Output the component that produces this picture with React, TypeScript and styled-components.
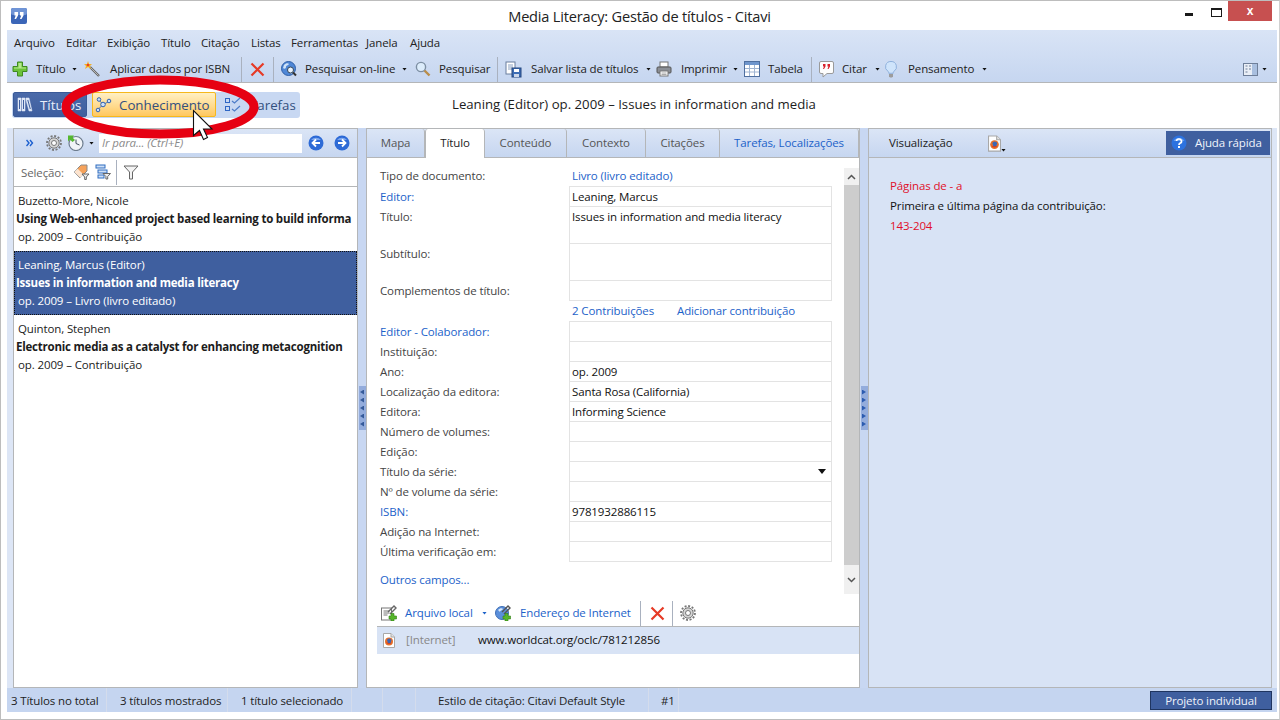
import React from "react";
import styled, { createGlobalStyle } from "styled-components";

const Global = createGlobalStyle`
  html, body { margin: 0; padding: 0; background: #fff; }
  *, *::before, *::after { box-sizing: border-box; }
  body { font-family: "Open Sans", "Liberation Sans", sans-serif; font-size: 11.5px; color: #1c1c1c; }
  #root { width: 1280px; height: 720px; overflow: hidden; }
`;

const BLUE = "#1c62c9";
const LINE = "#b4b6b8";
const SEL = "#3f5f9f";

const Win = styled.div`
  position: relative; width: 1280px; height: 720px;
  border: 1px solid #bdbdbd; border-right-color: #d0d0d0; background: #fff;
  display: flex; flex-direction: column; letter-spacing: -0.12px;
`;
const TitleBar = styled.div`
  height: 29px; flex: none; display: flex; align-items: flex-start; position: relative; background: #fff;
`;
const AppIcon = styled.svg`margin: 7px 0 0 10px; flex: none;`;
const WinTitle = styled.div`
  position: absolute; left: 0; right: 0; top: 5px; text-align: center; font-size: 14.6px; line-height: 20px;
  color: #222; letter-spacing: -0.2px; padding-right: 1px;
`;
const WinControls = styled.div`margin-left: auto; margin-right: 7px; display: flex; height: 20px; align-items: flex-start; position: relative;`;
const MinBtn = styled.span`width: 8px; height: 3px; background: #1a1a1a; margin: 12px 18px 0 0;`;
const MaxBtn = styled.span`width: 11px; height: 9px; border: 1px solid #1a1a1a; border-top-width: 2px; margin: 7px 6px 0 0;`;
const CloseBtn = styled.span`
  width: 44px; height: 20px; background: #c75050; color: #fff; font-size: 12px; font-weight: 700;
  display: flex; align-items: center; justify-content: center; font-family: "Liberation Sans", sans-serif;
`;

const Client = styled.div`
  margin: 0 2px 7px 6px; flex: 1; min-height: 0; display: flex; flex-direction: column; background: #dde6f6;
`;
const Band = styled.div`
  height: 53px; flex: none; border-bottom: 1px solid ${LINE};
  background: linear-gradient(#d9e4f6, #c6d6f0);
`;
const MenuRow = styled.div`height: 26px; display: flex; align-items: center; padding: 0 0 2px 7px; color: #222;`;
const MenuItem = styled.span<{ $w: number }>`width: ${(p) => p.$w}px; white-space: nowrap; flex: none;`;
const ToolRow = styled.div`height: 26px; display: flex; align-items: center; color: #222;`;
const ToolIcon = styled.svg<{ $ml: number }>`margin-left: ${(p) => p.$ml}px; flex: none; display: block;`;
const ToolLabel = styled.span<{ $ml: number; $w: number }>`
  margin-left: ${(p) => p.$ml}px; width: ${(p) => p.$w}px; flex: none; white-space: nowrap; margin-bottom: 2px;
`;
const Caret = styled.span<{ $ml: number; $c?: string; $mt?: number }>`
  margin-left: ${(p) => p.$ml}px; margin-top: ${(p) => p.$mt || 0}px; flex: none; width: 5px; height: 3px;
  background: ${(p) => p.$c || "#111"}; clip-path: polygon(0 0, 100% 0, 50% 100%);
`;
const ToolSep = styled.span<{ $ml: number }>`
  margin-left: ${(p) => p.$ml}px; width: 1px; height: 25px; background: #a9b1bf; flex: none;
`;

const ViewBar = styled.div`height: 45px; flex: none; background: #fff; display: flex; align-items: flex-start; padding: 9px 0 0 5px;`;
const ViewPill = styled.div`
  width: 288px; height: 26px; background: #c8d8f2; border-radius: 3px; display: flex; font-size: 13.3px;
  letter-spacing: 0;
`;
const ViewTab = styled.div<{ $w: number; $ml: number; $state?: "active" | "hover" }>`
  width: ${(p) => p.$w}px; margin-left: ${(p) => p.$ml}px; height: 25px; flex: none;
  display: flex; align-items: center; border-radius: 2px; padding-left: 3px; white-space: nowrap;
  color: ${(p) => (p.$state === "active" ? "#e8eefa" : "#33507f")};
  background: ${(p) =>
    p.$state === "active"
      ? `linear-gradient(#4a6aa9, ${SEL})`
      : p.$state === "hover"
      ? "linear-gradient(#fff0c4, #ffd98a 60%, #ffc75e)"
      : "transparent"};
  border: 1px solid ${(p) => (p.$state === "active" ? "#3a5a98" : p.$state === "hover" ? "#f6b81c" : "transparent")};
`;
const ViewLabel = styled.span<{ $ml: number }>`margin-left: ${(p) => p.$ml}px;`;
const DocTitle = styled.div`margin: 2px 0 0 152px; font-size: 13.2px; line-height: 20px; color: #1c1c1c; white-space: nowrap; letter-spacing: 0;`;

const Panels = styled.div`height: 560px; flex: none; display: flex; padding-left: 6px;`;
const Panel = styled.div<{ $w: number; $bg?: string }>`
  width: ${(p) => p.$w}px; flex: none; border: 1px solid ${LINE};
  background: ${(p) => p.$bg || "#fff"}; display: flex; flex-direction: column; min-width: 0;
`;
const Splitter = styled.div`
  width: 8px; flex: none; background: #c8d7f2; display: flex; align-items: center; justify-content: center;
`;
const SplitHandle = styled.div`
  width: 7px; height: 44px; background: #93acdc; display: flex; flex-direction: column; align-items: center;
  justify-content: center; gap: 3px;
`;
const Tri = styled.span<{ $dir: "l" | "r" }>`
  width: 4px; height: 5px; background: ${(p) => (p.$dir === "l" ? "#355a9a" : "#2b5bb0")};
  clip-path: ${(p) => (p.$dir === "l" ? "polygon(100% 0, 100% 100%, 0 50%)" : "polygon(0 0, 0 100%, 100% 50%)")};
`;
const PanelHead = styled.div`
  height: 29px; flex: none; border-bottom: 1px solid ${LINE};
  background: linear-gradient(#dbe5f6, #c6d6f0); display: flex; align-items: center;
`;
const SearchBox = styled.div`
  margin-left: 5px; width: 203px; height: 19px; background: #fff; flex: none; color: #8a8a8a; font-style: italic;
  padding-left: 3px; line-height: 18px; white-space: nowrap; overflow: hidden;
`;
const SelectBar = styled.div`
  height: 29px; flex: none; border-bottom: 1px solid ${LINE}; display: flex; align-items: center; color: #666;
  ${ToolLabel} { margin-bottom: 0; }
`;
const ListItem = styled.div<{ $sel?: boolean }>`
  height: 64px; flex: none; padding: 5px 0 0 2px;
  overflow: hidden; white-space: nowrap;
  color: ${(p) => (p.$sel ? "#fff" : "#1c1c1c")};
  background: ${(p) => (p.$sel ? SEL : "#fff")};
  ${(p) => (p.$sel ? "outline: 1px dotted #111; outline-offset: -1px;" : "")}
`;
const ListLine = styled.div<{ $bold?: boolean }>`
  height: 18px; line-height: 18px; padding-left: ${(p) => (p.$bold ? "0" : "2px")};
  font-weight: ${(p) => (p.$bold ? 700 : 400)};
  letter-spacing: ${(p) => (p.$bold ? "-0.22px" : "-0.12px")};
`;

const TabBar = styled.div`height: 29px; flex: none; border-bottom: 1px solid ${LINE}; display: flex; background: linear-gradient(#dbe5f6, #c6d6f0);`;
const Tab = styled.div<{ $w: number; $active?: boolean; $link?: boolean }>`
  width: ${(p) => p.$w}px; flex: none; height: ${(p) => (p.$active ? "29px" : "28px")};
  display: flex; align-items: center; justify-content: center; white-space: nowrap; padding-bottom: ${(p) => (p.$active ? "3px" : "2px")};
  border-right: 1px solid ${LINE}; border-radius: 3px 3px 0 0;
  ${(p) => (p.$active ? `background:#fff; border-left:1px solid ${LINE};` : "")}
  color: ${(p) => (p.$active ? "#1c1c1c" : p.$link ? BLUE : "#555")};
`;
const FormArea = styled.div`height: 442px; flex: none; display: flex;`;
const Form = styled.div`width: 477px; flex: none; padding: 7px 0 0 13px;`;
const FieldRow = styled.div<{ $h?: number }>`
  height: ${(p) => p.$h || 20}px; display: grid; grid-template-columns: 189px 263px; color: #444; line-height: 21px;
`;
const FieldLabel = styled.span<{ $link?: boolean }>`color: ${(p) => (p.$link ? BLUE : "#444")}; white-space: nowrap;`;
const FieldBox = styled.div<{ $h?: number }>`
  height: ${(p) => (p.$h || 20) + 1}px; border: 1px solid #e3e3e3; color: #111; padding-left: 2px;
  line-height: 19px; white-space: nowrap; position: relative; display: block;
`;
const FieldLink = styled.span<{ $w?: number }>`
  color: ${BLUE}; display: inline-block; white-space: nowrap; padding-left: 3px; ${(p) => (p.$w ? `width:${p.$w}px;` : "")}
`;
const FieldLinks = styled.div`display: flex;`;
const SelectArrow = styled.span`
  position: absolute; right: 5px; top: 7px; width: 8px; height: 5px; background: #111;
  clip-path: polygon(0 0, 100% 0, 50% 100%);
`;
const OtherFields = styled.div`margin-top: 9px; color: ${BLUE}; line-height: 20px;`;
const ScrollBar = styled.div`
  width: 15px; margin: 10px 0 6px 0; flex: none; background: #f0f0f0; display: flex; flex-direction: column;
`;
const ScrollBtn = styled.div<{ $h: number }>`height: ${(p) => p.$h}px; flex: none; display: flex; align-items: center; justify-content: center;`;
const ScrollThumb = styled.div`height: 380px; background: #cdcdcd; flex: none;`;
const AttachBar = styled.div`
  height: 27px; flex: none; margin-left: 10px; border-bottom: 1px solid ${LINE}; display: flex; align-items: center; color: ${BLUE};
`;
const AttachRow = styled.div`
  height: 27px; flex: none; margin-left: 10px; background: #d8e3f5; display: flex; align-items: center;
`;
const Muted = styled.span`margin: 0 0 2px 11px; width: 72px; color: #888; flex: none;`;
const Url = styled.span`color: #111; margin-bottom: 2px;`;

const PreviewHead = styled.div`
  height: 29px; flex: none; border-bottom: 1px solid ${LINE}; display: flex; align-items: center; padding-left: 20px;
  background: linear-gradient(#dbe5f6, #c6d6f0); position: relative; color: #222;
`;
const HelpBtn = styled.div`
  margin-left: auto; margin-right: 1px; width: 104px; height: 24px; background: ${SEL}; color: #f0f4fc; display: flex;
  align-items: center; padding-left: 5px; white-space: nowrap;
`;
const PreviewBody = styled.div`padding: 18px 0 0 21px; line-height: 20px; color: #111;`;
const RedText = styled.div`color: #e0102a;`;

const Status = styled.div`height: 24px; flex: none; background: #c5d5f0; display: flex; align-items: center; color: #222;`;
const StatusCell = styled.span<{ $w: number; $pl: number }>`
  width: ${(p) => p.$w}px; padding-left: ${(p) => p.$pl}px; flex: none; height: 100%;
  display: flex; align-items: center; border-right: 1px solid #d4dcec; white-space: nowrap;
`;
const ProjectBtn = styled.div`
  margin-left: auto; margin-right: 5px; width: 122px; height: 19px; background: ${SEL}; color: #eef2fb;
  border: 1px solid #1f3560; display: flex; align-items: center; justify-content: center; white-space: nowrap;
`;
const Overlay = styled.svg`position: absolute; pointer-events: none;`;
const Ring = styled(Overlay)`left: 56px; top: 70px;`;
const Pointer = styled(Overlay)`left: 191px; top: 108px;`;

type IP = { ml?: number };
const Plus = ({ ml = 0 }: IP) => (
  <ToolIcon $ml={ml} width="16" height="16" viewBox="0 0 16 16">
    <path d="M5.5 1h5v4.5H15v5h-4.5V15h-5v-4.5H1v-5h4.5z" fill="#6cc23a" stroke="#3f8a20" />
    <path d="M6.5 2h3v4.5H14v1H2v-1h4.500z" fill="#b5e88f" />
  </ToolIcon>
);
const Wand = ({ ml = 0 }: IP) => (
  <ToolIcon $ml={ml} width="16" height="16" viewBox="0 0 16 16">
    <path d="M6 6l9 9" stroke="#666" strokeWidth="2.4" />
    <path d="M6.500 6.500l8 8" stroke="#ccc" strokeWidth=".8" />
    <path d="M4 0l1 3 3 0-2 2 1 3-3-2-3 2 1-3-2-2 3 0z" fill="#f5b021" />
    <circle cx="4" cy="4" r="1.300" fill="#e8402a" />
  </ToolIcon>
);
const RedX = ({ ml = 0 }: IP) => (
  <ToolIcon $ml={ml} width="15" height="15" viewBox="0 0 15 15">
    <path d="M1.500 1.500l12 12M13.500 1.500l-12 12" stroke="#e63a26" strokeWidth="2.200" />
  </ToolIcon>
);
const Globe = ({ ml = 0 }: IP) => (
  <ToolIcon $ml={ml} width="16" height="16" viewBox="0 0 16 16">
    <circle cx="7.500" cy="7.500" r="7" fill="#4f87d6" stroke="#2f5fa8" />
    <path d="M3 4c2-2 4-2 5-1-1 2-3 1-3 3S3 8 2 7zM9 8c2-1 4 0 4 2l-3 3c-1-1-2-3-1-5z" fill="#cfe3f8" />
    <circle cx="9.500" cy="9" r="3" fill="#eaf3fd" stroke="#345" />
    <path d="M12 11.500l3 3" stroke="#333" strokeWidth="2" />
  </ToolIcon>
);
const Lens = ({ ml = 0 }: IP) => (
  <ToolIcon $ml={ml} width="16" height="16" viewBox="0 0 16 16">
    <circle cx="6" cy="6" r="4.600" fill="#dcecfb" stroke="#7d8fa3" strokeWidth="1.400" />
    <path d="M9.500 9.500l5 5" stroke="#b98d4a" strokeWidth="2.400" />
  </ToolIcon>
);
const SaveList = ({ ml = 0 }: IP) => (
  <ToolIcon $ml={ml} width="17" height="17" viewBox="0 0 17 17">
    <rect x="1" y="1" width="9" height="12" fill="#fff" stroke="#6b7f9e" />
    <path d="M3 4h5M3 6h5M3 8h5" stroke="#8aa0c0" />
    <rect x="7" y="7" width="9" height="9" fill="#3d6db5" stroke="#24477f" />
    <rect x="9" y="8" width="5" height="3" fill="#fff" />
    <rect x="9" y="13" width="5" height="3" fill="#cdd8ea" />
  </ToolIcon>
);
const Printer = ({ ml = 0 }: IP) => (
  <ToolIcon $ml={ml} width="16" height="16" viewBox="0 0 16 16">
    <rect x="4" y="1" width="8" height="5" fill="#fff" stroke="#777" />
    <rect x="1" y="6" width="14" height="6" rx="1" fill="#8b8f96" stroke="#555" />
    <rect x="4" y="10" width="8" height="5" fill="#fff" stroke="#777" />
    <path d="M5.500 12h5M5.500 13.500h5" stroke="#aaa" />
  </ToolIcon>
);
const TableIcon = ({ ml = 0 }: IP) => (
  <ToolIcon $ml={ml} width="16" height="16" viewBox="0 0 16 16">
    <rect x=".5" y=".5" width="15" height="15" fill="#fff" stroke="#4f6f9f" />
    <rect x="1" y="1" width="14" height="3" fill="#6e95cc" />
    <path d="M5.500 4v11M10.500 4v11M1 7.500h14M1 11h14" stroke="#9fb4d2" />
  </ToolIcon>
);
const QuoteBubble = ({ ml = 0 }: IP) => (
  <ToolIcon $ml={ml} width="15" height="17" viewBox="0 0 15 17">
    <path d="M2 .5h11a1.500 1.500 0 0 1 1.500 1.500v9a1.500 1.500 0 0 1-1.500 1.500H8L4 16v-3.500H2A1.500 1.500 0 0 1 .5 11V2A1.500 1.500 0 0 1 2 .5z" fill="#fdfdfd" stroke="#9a9a9a" />
    <path d="M4 3h2.500v2.500L5 8H4l1-2.500H4zM8.500 3H11v2.500L9.500 8h-1l1-2.500h-1z" fill="#d8202a" />
  </ToolIcon>
);
const Bulb = ({ ml = 0 }: IP) => (
  <ToolIcon $ml={ml} width="12" height="17" viewBox="0 0 12 17">
    <path d="M6 .5a5.300 5.300 0 0 1 3 9.800c-.7.5-.8 1.200-.8 2H3.800c0-.8-.1-1.500-.8-2A5.300 5.300 0 0 1 6 .5z" fill="#cfe4fb" stroke="#8eb0dc" />
    <path d="M4 13h4v2.500l-1 1H5l-1-1z" fill="#9c9c9c" />
  </ToolIcon>
);
const LayoutIcon = ({ ml = 0 }: IP) => (
  <ToolIcon $ml={ml} width="15" height="13" viewBox="0 0 15 13">
    <rect x=".5" y=".5" width="14" height="12" fill="#e9eef6" stroke="#6f7f99" />
    <rect x="9" y="1" width="5" height="11" fill="#a9bfdf" />
    <path d="M2.500 3h2M2.500 6h2M2.500 9h2M6 3h2M6 6h2" stroke="#6f7f99" />
  </ToolIcon>
);
const Gear = ({ ml = 0 }: IP) => (
  <ToolIcon $ml={ml} width="16" height="16" viewBox="0 0 16 16">
    <circle cx="8" cy="8" r="5.200" fill="#d4d4d4" stroke="#777" />
    <circle cx="8" cy="8" r="7" fill="none" stroke="#777" strokeWidth="1.800" strokeDasharray="2 1.660" />
    <circle cx="8" cy="8" r="2.500" fill="#fff" stroke="#777" />
  </ToolIcon>
);
const Clock = ({ ml = 0 }: IP) => (
  <ToolIcon $ml={ml} width="17" height="16" viewBox="0 0 17 16">
    <circle cx="9" cy="8.500" r="7" fill="#f1f4f8" stroke="#6d7c8e" strokeWidth="1.200" />
    <path d="M9 4.500v4l3.500 1.500" stroke="#44505e" fill="none" />
    <path d="M1 .5h6L5.500 2.500 8 5 5.500 7 3 4.500 1 6.500z" fill="#55b82f" />
  </ToolIcon>
);
const Chevrons = ({ ml = 0 }: IP) => (
  <ToolIcon $ml={ml} width="8" height="8" viewBox="0 0 8 8">
    <path d="M.5 1l2.500 3-2.500 3M4 1l2.500 3L4 7" fill="none" stroke="#1b5fcf" strokeWidth="1.400" />
  </ToolIcon>
);
const NavBtn = ({ ml = 0, left }: IP & { left?: boolean }) => (
  <ToolIcon $ml={ml} width="16" height="16" viewBox="0 0 16 16">
    <circle cx="8" cy="8" r="7.500" fill="#2d6ad6" />
    <path d="M3 5a6 5 0 0 1 10 0z" fill="#7ea8ee" />
    <path d={left ? "M12 8H5M8 4.500L4.500 8 8 11.500" : "M4 8h7M8 4.500L11.500 8 8 11.500"} fill="none" stroke="#fff" strokeWidth="1.800" />
  </ToolIcon>
);
const TagFilter = ({ ml = 0 }: IP) => (
  <ToolIcon $ml={ml} width="17" height="16" viewBox="0 0 17 16">
    <path d="M1 8l7-7h6v6l-7 7z" fill="#f6a25a" stroke="#8a8a8a" />
    <path d="M1 8l3.500-3.500L11 11l-3.500 3z" fill="#fff" opacity=".7" />
    <path d="M9 10h7l-2.700 3v2.500h-1.600V13z" fill="#eee" stroke="#666" />
  </ToolIcon>
);
const TreeFilter = ({ ml = 0 }: IP) => (
  <ToolIcon $ml={ml} width="16" height="16" viewBox="0 0 16 16">
    <rect x="1" y="1" width="9" height="3" fill="#cfe0f6" stroke="#2f6cc0" />
    <rect x="3" y="6" width="9" height="3" fill="#cfe0f6" stroke="#2f6cc0" />
    <rect x="3" y="11" width="6" height="3" fill="#cfe0f6" stroke="#2f6cc0" />
    <path d="M8 9.500h7.500l-2.800 3v2.500h-1.800v-2.500z" fill="#eee" stroke="#666" />
  </ToolIcon>
);
const Funnel = ({ ml = 0 }: IP) => (
  <ToolIcon $ml={ml} width="16" height="15" viewBox="0 0 16 15">
    <path d="M1 1h14L9.500 7v7h-3V7z" fill="#f3f3f3" stroke="#666" />
  </ToolIcon>
);
const FileFox = ({ ml = 0, w = 12, h = 15 }: IP & { w?: number; h?: number }) => (
  <ToolIcon $ml={ml} width={w} height={h} viewBox="0 0 12 15">
    <path d="M.5.5h7.500l3.500 3.500v10.500H.5z" fill="#fff" stroke="#a8a8a8" />
    <path d="M8 .5v3.500h3.500" fill="#e4e4e4" stroke="#a8a8a8" />
    <circle cx="6" cy="8.500" r="4" fill="#e8702a" />
    <path d="M4 7a2.500 2.500 0 0 1 4.500 0l-1 3.500H5z" fill="#3b66b5" />
    <path d="M3 9a3.200 3.200 0 0 0 6 0c-1 1.500-4 1.500-6 0z" fill="#d83b1f" />
  </ToolIcon>
);
const AttachFile = ({ ml = 0 }: IP) => (
  <ToolIcon $ml={ml} width="17" height="16" viewBox="0 0 17 16">
    <rect x=".5" y="3" width="10" height="12" fill="#fff" stroke="#777" />
    <path d="M2.500 6h6M2.500 8h6M2.500 10h4" stroke="#777" />
    <path d="M7 7l6-6 2 2-6 6" fill="none" stroke="#666" strokeWidth="1.400" />
    <path d="M10 8.500h3v2.500h2.500v3H13v2h-3v-2H8v-3h2z" fill="#56b52a" stroke="#2f7f14" strokeWidth=".6" />
  </ToolIcon>
);
const AttachWeb = ({ ml = 0 }: IP) => (
  <ToolIcon $ml={ml} width="17" height="16" viewBox="0 0 17 16">
    <circle cx="7" cy="8" r="6.500" fill="#5a8fdb" stroke="#3f6fb5" />
    <path d="M3 5c2-2 4-2 5-1-1 2-3 1-3 3z" fill="#d7e7f9" />
    <path d="M7 7l6-6 2 2-6 6" fill="none" stroke="#555" strokeWidth="1.400" />
    <path d="M10 8.500h3v2.500h2.500v3H13v2h-3v-2H8v-3h2z" fill="#56b52a" stroke="#2f7f14" strokeWidth=".6" />
  </ToolIcon>
);
const Books = ({ ml = 0 }: IP) => (
  <ToolIcon $ml={ml} width="16" height="15" viewBox="0 0 16 15">
    <path d="M1 1h3v13H1zM5 1h3v13H5zM9 1h3l3 13h-3l-3-11z" fill="#dbe5f5" stroke="#e8eefa" strokeWidth=".5" />
    <path d="M2.500 3v9M6.500 3v9M10.800 3l2.500 9" stroke="#3f5f9f" />
  </ToolIcon>
);
const Nodes = ({ ml = 0 }: IP) => (
  <ToolIcon $ml={ml} width="17" height="17" viewBox="0 0 17 17">
    <path d="M3 13.500L8 8.500 4 4M8 8.500l6-3" stroke="#4d74b4" fill="none" />
    <circle cx="8" cy="8.500" r="2.300" fill="#cfe0f6" stroke="#2f62b0" />
    <circle cx="4" cy="3.500" r="1.800" fill="#cfe0f6" stroke="#2f62b0" />
    <circle cx="14" cy="5" r="1.800" fill="#cfe0f6" stroke="#2f62b0" />
    <circle cx="3" cy="14" r="1.800" fill="#cfe0f6" stroke="#2f62b0" />
  </ToolIcon>
);
const Checks = ({ ml = 0 }: IP) => (
  <ToolIcon $ml={ml} width="17" height="15" viewBox="0 0 17 15">
    <rect x=".5" y="1.500" width="4" height="4" fill="none" stroke="#2f66c4" />
    <rect x=".5" y="9.500" width="4" height="4" fill="none" stroke="#2f66c4" />
    <path d="M7 4l2.500 2L15 1M7 12l2.500 2L15 9" fill="none" stroke="#4d7cc8" strokeWidth="1.200" />
  </ToolIcon>
);
const Help = ({ ml = 0 }: IP) => (
  <ToolIcon $ml={ml} width="16" height="16" viewBox="0 0 16 16">
    <circle cx="8" cy="8" r="7.500" fill="#2c72e0" />
    <path d="M2.500 6a6 5 0 0 1 11 0z" fill="#7fb0f5" opacity=".7" />
    <path d="M5.500 6a2.500 2.200 0 1 1 3.500 2.200C8.200 8.700 8 9 8 10" fill="none" stroke="#fff" strokeWidth="1.700" />
    <rect x="7" y="11" width="2" height="2" fill="#fff" />
  </ToolIcon>
);

const Split = ({ dir }: { dir: "l" | "r" }) => (
  <Splitter>
    <SplitHandle>
      {[0, 1, 2, 3, 4].map((i) => (
        <Tri key={i} $dir={dir} />
      ))}
    </SplitHandle>
  </Splitter>
);

const menus: [string, number][] = [
  ["Arquivo", 52], ["Editar", 41], ["Exibição", 54], ["Título", 40], ["Citação", 50], ["Listas", 40],
  ["Ferramentas", 75], ["Janela", 44], ["Ajuda", 40],
];

const fields: { l: string; v?: string; link?: boolean; select?: boolean }[] = [
  { l: "Editor - Colaborador:", link: true },
  { l: "Instituição:" },
  { l: "Ano:", v: "op. 2009" },
  { l: "Localização da editora:", v: "Santa Rosa (California)" },
  { l: "Editora:", v: "Informing Science" },
  { l: "Número de volumes:" },
  { l: "Edição:" },
  { l: "Título da série:", select: true },
  { l: "Nº de volume da série:" },
  { l: "ISBN:", v: "9781932886115", link: true },
  { l: "Adição na Internet:" },
  { l: "Última verificação em:" },
];

const items = [
  { a: "Buzetto-More, Nicole", t: "Using Web-enhanced project based learning to build informa", c: "op. 2009 – Contribuição" },
  { a: "Leaning, Marcus (Editor)", t: "Issues in information and media literacy", c: "op. 2009 – Livro (livro editado)", sel: true },
  { a: "Quinton, Stephen", t: "Electronic media as a catalyst for enhancing metacognition", c: "op. 2009 – Contribuição" },
];

export default function App() {
  return (
    <Win>
      <Global />
      <TitleBar>
        <AppIcon width="16" height="16" viewBox="0 0 16 16">
          <rect width="16" height="16" rx="2" fill="#3b66b8" />
          <rect width="16" height="7" rx="2" fill="#6f94d6" />
          <path d="M3.500 4h3.500v3.500L5 11H3.500l1.200-3.500H3.500zM9 4h3.500v3.500L10.500 11H9l1.200-3.500H9z" fill="#fff" />
        </AppIcon>
        <WinTitle>Media Literacy: Gestão de títulos - Citavi</WinTitle>
        <WinControls>
          <MinBtn />
          <MaxBtn />
          <CloseBtn>x</CloseBtn>
        </WinControls>
      </TitleBar>
      <Client>
        <Band>
          <MenuRow>
            {menus.map(([m, w]) => (
              <MenuItem key={m} $w={w}>{m}</MenuItem>
            ))}
          </MenuRow>
          <ToolRow>
            <Plus ml={5} />
            <ToolLabel $ml={8} $w={36}>Título</ToolLabel>
            <Caret $ml={0} />
            <Wand ml={7} />
            <ToolLabel $ml={10} $w={121}>Aplicar dados por ISBN</ToolLabel>
            <ToolSep $ml={10} />
            <RedX ml={8} />
            <ToolSep $ml={8} />
            <Globe ml={7} />
            <ToolLabel $ml={8} $w={91}>Pesquisar on-line</ToolLabel>
            <Caret $ml={6} />
            <Lens ml={8} />
            <ToolLabel $ml={8} $w={50}>Pesquisar</ToolLabel>
            <ToolSep $ml={8} />
            <SaveList ml={7} />
            <ToolLabel $ml={9} $w={107}>Salvar lista de títulos</ToolLabel>
            <Caret $ml={8} />
            <Printer ml={5} />
            <ToolLabel $ml={9} $w={44}>Imprimir</ToolLabel>
            <Caret $ml={8} />
            <TableIcon ml={6} />
            <ToolLabel $ml={8} $w={34}>Tabela</ToolLabel>
            <ToolSep $ml={9} />
            <QuoteBubble ml={7} />
            <ToolLabel $ml={8} $w={24}>Citar</ToolLabel>
            <Caret $ml={9} />
            <Bulb ml={5} />
            <ToolLabel $ml={11} $w={64}>Pensamento</ToolLabel>
            <Caret $ml={10} />
            <LayoutIcon ml={256} />
            <Caret $ml={4} />
          </ToolRow>
        </Band>
        <ViewBar>
          <ViewPill>
            <ViewTab $w={74} $ml={1} $state="active">
              <Books ml={0} />
              <ViewLabel $ml={7}>Títulos</ViewLabel>
            </ViewTab>
            <ViewTab $w={124} $ml={5} $state="hover">
              <Nodes ml={-1} />
              <ViewLabel $ml={7}>Conhecimento</ViewLabel>
            </ViewTab>
            <ViewTab $w={80} $ml={5}>
              <Checks ml={0} />
              <ViewLabel $ml={8}>Tarefas</ViewLabel>
            </ViewTab>
          </ViewPill>
          <DocTitle>Leaning (Editor) op. 2009 – Issues in information and media</DocTitle>
        </ViewBar>
        <Panels>
          <Panel $w={345}>
            <PanelHead>
              <Chevrons ml={12} />
              <Gear ml={12} />
              <Clock ml={5} />
              <Caret $ml={5} />
              <SearchBox>Ir para... (Ctrl+E)</SearchBox>
              <NavBtn ml={6} left />
              <NavBtn ml={10} />
            </PanelHead>
            <SelectBar>
              <ToolLabel $ml={7} $w={42}>Seleção:</ToolLabel>
              <TagFilter ml={10} />
              <TreeFilter ml={5} />
              <ToolSep $ml={5} />
              <Funnel ml={6} />
            </SelectBar>
            {items.map((it) => (
              <ListItem key={it.a} $sel={it.sel}>
                <ListLine>{it.a}</ListLine>
                <ListLine $bold>{it.t}</ListLine>
                <ListLine>{it.c}</ListLine>
              </ListItem>
            ))}
          </Panel>
          <Split dir="l" />
          <Panel $w={494}>
            <TabBar>
              <Tab $w={58}>Mapa</Tab>
              <Tab $w={60} $active>Título</Tab>
              <Tab $w={82}>Conteúdo</Tab>
              <Tab $w={79}>Contexto</Tab>
              <Tab $w={74}>Citações</Tab>
              <Tab $w={139} $link>Tarefas, Localizações</Tab>
            </TabBar>
            <FormArea>
              <Form>
                <FieldRow $h={21}>
                  <FieldLabel>Tipo de documento:</FieldLabel>
                  <FieldLink>Livro (livro editado)</FieldLink>
                </FieldRow>
                <FieldRow>
                  <FieldLabel $link>Editor:</FieldLabel>
                  <FieldBox>Leaning, Marcus</FieldBox>
                </FieldRow>
                <FieldRow $h={37}>
                  <FieldLabel>Título:</FieldLabel>
                  <FieldBox $h={37}>Issues in information and media literacy</FieldBox>
                </FieldRow>
                <FieldRow $h={37}>
                  <FieldLabel>Subtítulo:</FieldLabel>
                  <FieldBox $h={37} />
                </FieldRow>
                <FieldRow>
                  <FieldLabel>Complementos de título:</FieldLabel>
                  <FieldBox />
                </FieldRow>
                <FieldRow $h={21}>
                  <span />
                  <FieldLinks>
                    <FieldLink $w={105}>2 Contribuições</FieldLink>
                    <FieldLink>Adicionar contribuição</FieldLink>
                  </FieldLinks>
                </FieldRow>
                {fields.map((f) => (
                  <FieldRow key={f.l}>
                    <FieldLabel $link={f.link}>{f.l}</FieldLabel>
                    <FieldBox>
                      {f.v}
                      {f.select && <SelectArrow />}
                    </FieldBox>
                  </FieldRow>
                ))}
                <OtherFields>Outros campos...</OtherFields>
              </Form>
              <ScrollBar>
                <ScrollBtn $h={17}>
                  <svg width="9" height="6" viewBox="0 0 9 6"><path d="M1 5l3.500-3.500L8 5" fill="none" stroke="#555" strokeWidth="1.500" /></svg>
                </ScrollBtn>
                <ScrollThumb />
                <ScrollBtn $h={29}>
                  <svg width="9" height="6" viewBox="0 0 9 6"><path d="M1 1l3.500 3.500L8 1" fill="none" stroke="#555" strokeWidth="1.500" /></svg>
                </ScrollBtn>
              </ScrollBar>
            </FormArea>
            <AttachBar>
              <AttachFile ml={4} />
              <ToolLabel $ml={7} $w={71}>Arquivo local</ToolLabel>
              <Caret $ml={6} $c="#1c62c9" />
              <AttachWeb ml={8} />
              <ToolLabel $ml={8} $w={111}>Endereço de Internet</ToolLabel>
              <ToolSep $ml={9} />
              <RedX ml={9} />
              <ToolSep $ml={7} />
              <Gear ml={7} />
            </AttachBar>
            <AttachRow>
              <FileFox ml={6} />
              <Muted>[Internet]</Muted>
              <Url>www.worldcat.org/oclc/781212856</Url>
            </AttachRow>
          </Panel>
          <Split dir="r" />
          <Panel $w={404} $bg="#d8e3f5">
            <PreviewHead>
              <ToolLabel $ml={0} $w={64}>Visualização</ToolLabel>
              <FileFox ml={35} w={13} h={17} />
              <Caret $ml={0} $mt={14} />
              <HelpBtn>
                <Help />
                <ToolLabel $ml={8} $w={70}>Ajuda rápida</ToolLabel>
              </HelpBtn>
            </PreviewHead>
            <PreviewBody>
              <RedText>Páginas de - a</RedText>
              <div>Primeira e última página da contribuição:</div>
              <RedText>143-204</RedText>
            </PreviewBody>
          </Panel>
        </Panels>
        <Status>
          <StatusCell $w={100} $pl={4}>3 Títulos no total</StatusCell>
          <StatusCell $w={121} $pl={13}>3 títulos mostrados</StatusCell>
          <StatusCell $w={124} $pl={13}>1 título selecionado</StatusCell>
          <StatusCell $w={31} $pl={0} />
          <StatusCell $w={33} $pl={0} />
          <StatusCell $w={233} $pl={22}>Estilo de citação: Citavi Default Style</StatusCell>
          <StatusCell $w={30} $pl={12}>#1</StatusCell>
          <ProjectBtn>Projeto individual</ProjectBtn>
        </Status>
      </Client>
      <Ring width="208" height="74" viewBox="0 0 208 74">
        <ellipse cx="103" cy="36" rx="94" ry="27" fill="none" stroke="#e60012" strokeWidth="9" />
      </Ring>
      <Pointer width="24" height="32" viewBox="0 0 24 32">
        <path d="M1.500 1.500v25l6-5 4 9 4-2-4-8.500h8.500z" fill="#fff" stroke="#111" strokeWidth="1.100" />
      </Pointer>
    </Win>
  );
}
